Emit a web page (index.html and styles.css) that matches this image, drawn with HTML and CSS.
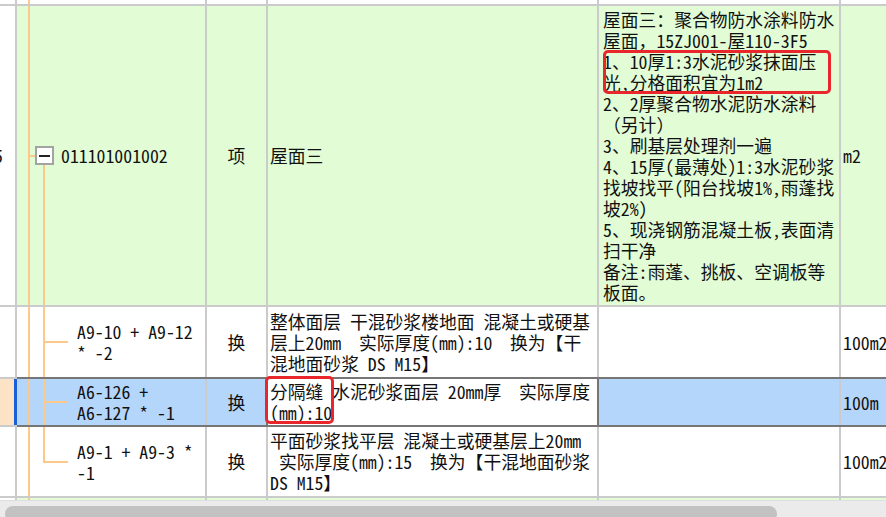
FILE: index.html
```html
<!DOCTYPE html>
<html lang="zh-CN">
<head>
<meta charset="utf-8">
<title>清单</title>
<link rel="stylesheet" href="styles.css">
</head>
<body>
<div class="sheet">
  <div class="row r0">
    <div class="c0"></div>
    <div class="main">
      <div class="cell code t-top"></div>
      <div class="cell"></div>
      <div class="cell"></div>
      <div class="cell"></div>
      <div class="cell"></div>
    </div>
  </div>
  <div class="row r1 green">
    <div class="c0"><span class="rownum">5</span></div>
    <div class="main">
      <div class="cell code t-parent"><span class="toggle"></span><span>011101001002</span></div>
      <div class="cell unit">项</div>
      <div class="cell desc">屋面三</div>
      <div class="cell feat"><div class="txt">屋面三<span class="fw">：</span>聚合物防水涂料防水<br>屋面<span class="fw">，</span>15ZJ001-屋110-3F5<br>1、10厚1:3水泥砂浆抹面压<br>光,分格面积宜为1m2<br>2、2厚聚合物水泥防水涂料<br><span class="fw">（</span>另计<span class="fw">）</span><br>3、刷基层处理剂一遍<br>4、15厚(最薄处)1:3水泥砂浆<br>找坡找平(阳台找坡1%,雨蓬找<br>坡2%)<br>5、现浇钢筋混凝土板,表面清<br>扫干净<br>备注:雨蓬、挑板、空调板等<br>板面。</div><span class="mark mark1"></span></div>
      <div class="cell qty">m2</div>
    </div>
  </div>
  <div class="row r2">
    <div class="c0"></div>
    <div class="main">
      <div class="cell code sub t-mid">A9-10 + A9-12<br>* -2</div>
      <div class="cell unit">换</div>
      <div class="cell desc">整体面层 干混砂浆楼地面 混凝土或硬基<br>层上20mm  实际厚度(mm):10  换为【干<br>混地面砂浆 DS M15】</div>
      <div class="cell feat"></div>
      <div class="cell qty">100m2</div>
    </div>
  </div>
  <div class="row r3 sel">
    <div class="c0"></div>
    <div class="main">
      <div class="cell code sub t-mid">A6-126 +<br>A6-127 * -1</div>
      <div class="cell unit">换</div>
      <div class="cell desc cur">分隔缝 水泥砂浆面层 20mm厚  实际厚度<br>(mm):10<span class="mark mark2"></span></div>
      <div class="cell feat"></div>
      <div class="cell qty">100m</div>
    </div>
  </div>
  <div class="row r4">
    <div class="c0"></div>
    <div class="main">
      <div class="cell code sub t-last">A9-1 + A9-3 *<br>-1</div>
      <div class="cell unit">换</div>
      <div class="cell desc">平面砂浆找平层 混凝土或硬基层上20mm<br> 实际厚度(mm):15  换为【干混地面砂浆<br>DS M15】</div>
      <div class="cell feat"></div>
      <div class="cell qty">100m2</div>
    </div>
  </div>
  <div class="row r5 green">
    <div class="c0"></div>
    <div class="main">
      <div class="cell code t-top"></div>
      <div class="cell"></div>
      <div class="cell"></div>
      <div class="cell"></div>
      <div class="cell"></div>
    </div>
  </div>
</div>
<div class="hscroll"><div class="thumb"></div></div>
</body>
</html>
```

FILE: styles.css
```css
html, body {
  margin: 0;
  height: 517px;
  overflow: hidden;
  background: #fff;
}
body {
  font-family: "Noto Sans CJK SC", sans-serif;
  font-size: 17.8px;
  line-height: 21px;
  color: #111;
  font-feature-settings: "hwid" 1;
}
.fw { font-feature-settings: normal; }
.sheet {
  display: flex;
  flex-direction: column;
  gap: 2px;
  background: #cbcbcb;
}
.row {
  display: flex;
  gap: 2px;
}
.r0 { height: 4px; }
.r1 { height: 299px; }
.r2 { height: 70px; }
.r3 { height: 46px; }
.r4 { height: 69px; }
.r5 { height: 2px; }

.c0 {
  width: 15px;
  flex: none;
  background: #fff;
  overflow: hidden;
  display: flex;
  align-items: center;
}
.rownum { margin-left: -6px; }

.main {
  flex: 1;
  display: grid;
  grid-template-columns: 188px 59px 329px 240px 46px;
  column-gap: 2px;
}
.cell {
  background-color: #fff;
  display: flex;
  align-items: center;
  white-space: pre;
  min-width: 0;
}
.green .cell { background-color: #e2fcd6; }
.sel .cell { background-color: #b5d6fb; }
.sel .cur { background-color: #fff; }

.sel .main { box-shadow: 0 -2px 0 #767676, 0 2px 0 #767676; }
.sel .c0 {
  background: #fde3c5;
  box-shadow: inset -1px 0 0 #1b5fd8, 2px 0 0 #1b5fd8;
}
.cur { box-shadow: 0 0 0 2px #767676; }

.unit { justify-content: center; }
.desc { padding-left: 2px; }
.feat { padding-left: 4px; position: relative; }
.qty { padding-left: 2px; overflow: hidden; }
.cur { position: relative; }

/* tree connector lines */
.code {
  background-repeat: no-repeat;
}
.t-top {
  background-image: linear-gradient(#fcc98b, #fcc98b);
  background-position: 11px 0;
  background-size: 2px 100%;
}
.t-parent {
  background-image: linear-gradient(#fcc98b, #fcc98b), linear-gradient(#fcc98b, #fcc98b), linear-gradient(#fcc98b, #fcc98b);
  background-position: 11px 0, 11px 50%, 26px 100%;
  background-size: 2px 100%, 7px 2px, 2px calc(50% - 9px);
}
.t-mid {
  background-image: linear-gradient(#fcc98b, #fcc98b), linear-gradient(#fcc98b, #fcc98b), linear-gradient(#fcc98b, #fcc98b);
  background-position: 11px 0, 26px 0, 26px 50%;
  background-size: 2px 100%, 2px 100%, 25px 2px;
}
.t-last {
  background-image: linear-gradient(#fcc98b, #fcc98b), linear-gradient(#fcc98b, #fcc98b), linear-gradient(#fcc98b, #fcc98b);
  background-position: 11px 0, 26px 0, 26px 50%;
  background-size: 2px 100%, 2px calc(50% + 1px), 25px 2px;
}
.sub { padding-left: 60px; }

.toggle {
  flex: none;
  width: 19px;
  height: 19px;
  box-sizing: border-box;
  border: 2px solid #a3a3a3;
  background: #fff;
  margin-left: 18px;
  margin-right: 7px;
  display: flex;
  align-items: center;
  justify-content: center;
}
.toggle::before {
  content: "";
  width: 11px;
  height: 2px;
  background: #222;
}

/* annotation marks */
.mark {
  position: absolute;
  box-sizing: border-box;
  border: 3px solid #e8262b;
  border-radius: 5px;
}
.mark1 { left: 4px; top: 44px; width: 228px; height: 44px; }
.mark2 { left: -3px; top: -3px; width: 69px; height: 48px; }

.hscroll {
  height: 17px;
  box-sizing: border-box;
  background: #ebebeb;
  border-top: 1px solid #dedede;
  padding: 5px 0 0 5px;
}
.thumb {
  width: 772px;
  height: 16px;
  background: #c2c2c2;
  border-radius: 8px;
}
```
